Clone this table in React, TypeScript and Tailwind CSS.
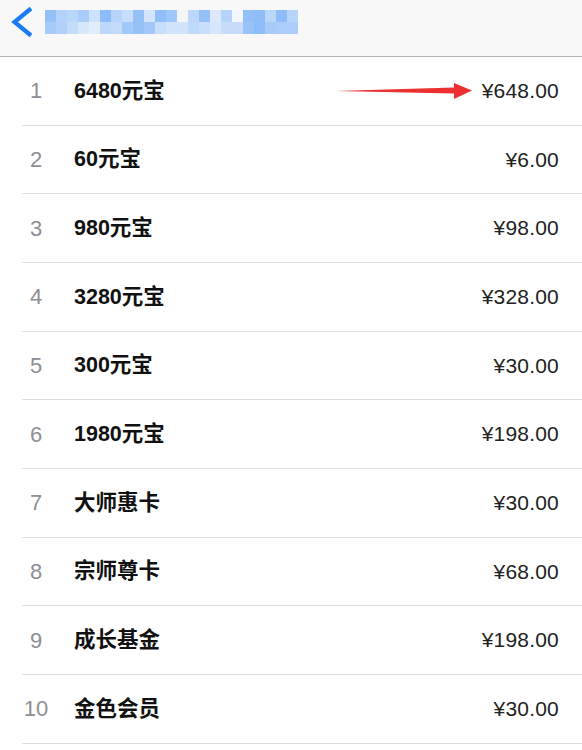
import React from 'react';

const items = [
  { n: 1, name: '6480元宝', price: '¥648.00' },
  { n: 2, name: '60元宝', price: '¥6.00' },
  { n: 3, name: '980元宝', price: '¥98.00' },
  { n: 4, name: '3280元宝', price: '¥328.00' },
  { n: 5, name: '300元宝', price: '¥30.00' },
  { n: 6, name: '1980元宝', price: '¥198.00' },
  { n: 7, name: '大师惠卡', price: '¥30.00' },
  { n: 8, name: '宗师尊卡', price: '¥68.00' },
  { n: 9, name: '成长基金', price: '¥198.00' },
  { n: 10, name: '金色会员', price: '¥30.00' },
];

// pixelated (blurred-out) title
const topRow = ['#94c0f8', '#b3d2fa', '#b9d6fb', '#a9cdfa', '#cfe2fb', '#8dbdf8', '#b6d4fa', '#c9defb', '#95c1f8', '#d3e5fb', '#90bef8', '#9fc7f9', '#f3f6f9', '#bcd7fa', '#93c0f8', '#dde9fa', '#b6d4fa', '#f3f6f9', '#92bff8', '#8ebdf8', '#bad6fa', '#8ebdf8', '#b7d5fa'];
const bottomRow = ['#a6cbf9', '#b0d0fa', '#c3dcfa', '#d7e7fb', '#e3edfa', '#bcd7fa', '#c2dbfa', '#a0c8f9', '#94c1f8', '#a1c8f9', '#c9defb', '#d2e4fb', '#d2e4fb', '#c0dafa', '#c9defb', '#d6e6fb', '#c8ddfa', '#c6dcfa', '#98c3f8', '#8dbdf8', '#a6cbf9', '#acccf9', '#accdf9'];

function Mosaic() {
  return (
    <svg width="253" height="24" viewBox="0 0 253 24">
      {topRow.map((c, i) => (
        <rect key={'t' + i} x={i * 11} y={0} width={11} height={12} fill={c} />
      ))}
      {bottomRow.map((c, i) => (
        <rect key={'b' + i} x={i * 11} y={12} width={11} height={12} fill={c} />
      ))}
    </svg>
  );
}

export default function App() {
  return (
    <div className="w-[582px] h-[750px] bg-white overflow-hidden" style={{ fontFamily: '"Liberation Sans", "Noto Sans CJK SC", sans-serif' }}>
      {/* Nav bar */}
      <div className="h-[57px] bg-[#f8f8f8] border-b border-[#b2b2b2] flex items-start pt-[6px]">
        <svg width="40" height="34" viewBox="0 0 40 34" className="ml-[3px]">
          <polyline points="28,2.5 11.5,16 28,29.5" fill="none" stroke="#1a7cf5" strokeWidth="4.2" strokeLinecap="butt" strokeLinejoin="miter" />
        </svg>
        <div className="mt-[4px] ml-[2px]">
          <Mosaic />
        </div>
      </div>

      {/* List */}
      <div className="pl-[22px]">
        {items.map((it) => (
          <div key={it.n} className="relative h-[68.67px] flex items-center border-b border-[#e0e0e0]">
            <span className="w-[28px] text-center text-[22px] text-[#8e8e93]">{it.n}</span>
            <span className="ml-[24px] text-[21.5px] font-bold text-[#111]">{it.name}</span>
            <span className="ml-auto mr-[23px] text-[21px] tracking-[0.2px] text-[#222]">{it.price}</span>
            {it.n === 1 && (
              <svg className="absolute left-[314px] top-[24px]" width="138" height="20" viewBox="0 0 138 20">
                <polygon points="0,10 118,6.5 118,2 136,9.5 118,18 118,12.5" fill="#ec2f2f" />
              </svg>
            )}
          </div>
        ))}
      </div>
    </div>
  );
}
